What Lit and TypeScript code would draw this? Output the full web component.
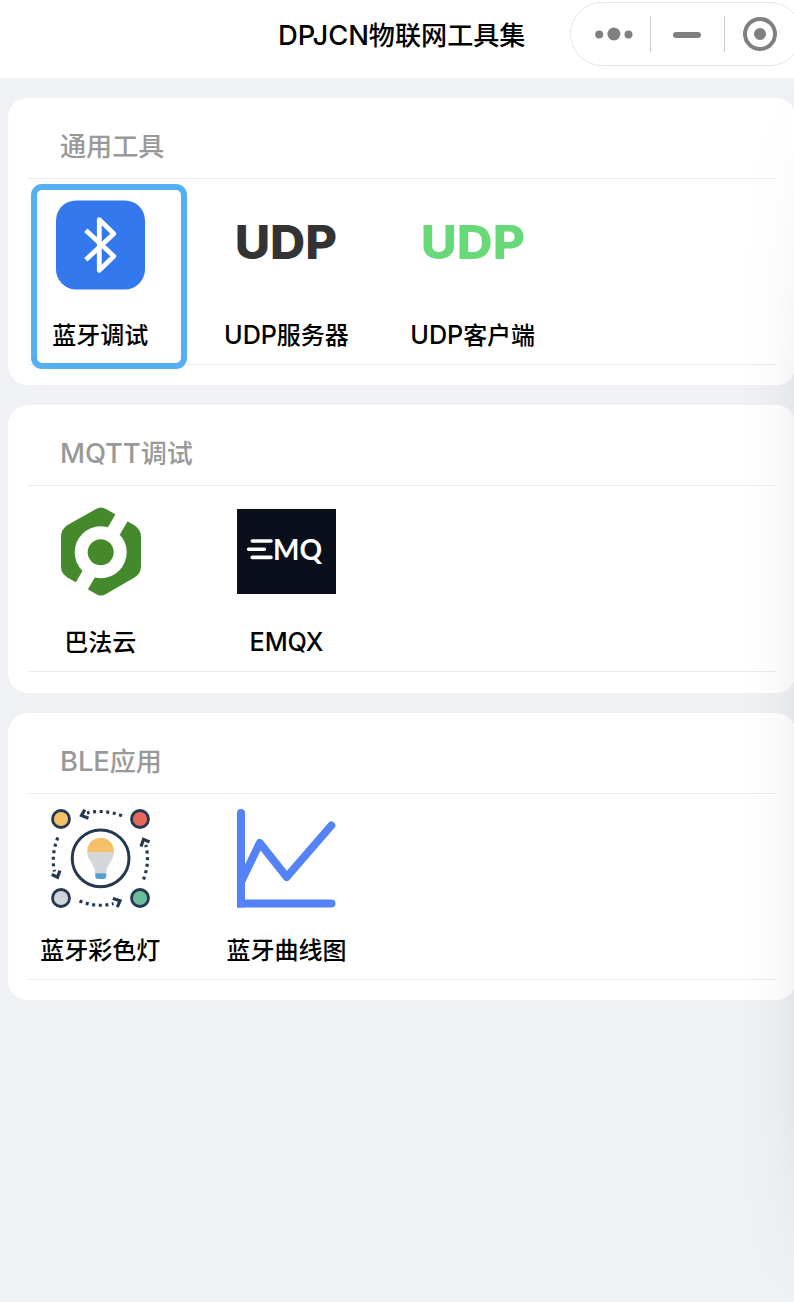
import { LitElement, html, css, svg, TemplateResult } from "lit";
import { customElement, property } from "lit/decorators.js";

interface Tool { label: string; icon: TemplateResult; active?: boolean }
interface Group { title: string; tools: Tool[] }

const bluetooth = html`<svg viewBox="0 0 100 100" width="100" height="100">
  <rect x="5" y="5.4" width="89" height="89" rx="20" fill="#3478ed"/>
  <path d="M34.8 35.2 L62.8 61.2 L48.3 75.4 V24.6 L62.8 38.8 L34.8 64.8" fill="none" stroke="#fff" stroke-width="4.8" stroke-linejoin="round"/>
</svg>`;

const udp = (color: string, width: number) => html`<svg viewBox="0 0 100 100" width="100" height="100" overflow="visible">
  <text class="udp" x="48.9" y="64.3" text-anchor="middle" fill=${color} textLength=${width} lengthAdjust="spacingAndGlyphs">UDP</text>
</svg>`;

const bafa = html`<svg viewBox="0 0 100 100" width="100" height="100">
  <path d="M45 7 Q50 3.8 55 7 L83 23.1 Q90 27.5 90 34.5 V64.5 Q90 71.5 83.5 75.5 L55 92 Q50 95 45 92 L16.5 75.5 Q10 71.5 10 64.5 V34.5 Q10 27.5 16.5 23.1 Z" fill="#448a2c"/>
  <path d="M74.5 9 L25.5 93" stroke="#fff" stroke-width="14"/>
  <circle cx="49.7" cy="50.3" r="26" fill="#fff"/>
  <circle cx="49.7" cy="50.3" r="13" fill="#448a2c"/>
</svg>`;

const emq = html`<svg viewBox="0 0 100 100" width="100" height="100">
  <rect x="0" y="7" width="99" height="85" fill="#0b0e1b"/>
  <path d="M15.3 39 H34 M11.6 47.3 H27.4 M15.3 55.4 H34" stroke="#fff" stroke-width="3.6" stroke-linecap="round"/>
  <text class="emq" x="36" y="57.7" fill="#fff" textLength="49" lengthAdjust="spacingAndGlyphs">MQ</text>
</svg>`;

const dots: [number, number, string][] = [
  [10, 10, "#f5c06a"], [89, 10, "#e5685a"], [10, 89, "#d1d5da"], [89, 89, "#6bbd9d"],
];

const lamp = html`<svg viewBox="0 0 100 100" width="100" height="100">
  ${dots.map(([x, y, c]) => svg`<circle cx=${x} cy=${y} r="8.5" fill=${c} stroke="#243850" stroke-width="2.8"/>`)}
  <circle cx="49.6" cy="49.3" r="28.4" fill="none" stroke="#243850" stroke-width="3"/>
  <path d="M36.2 43.4 C36.2 34 42 28.8 49.6 28.8 C57 28.8 63 34 63 43.4 Z" fill="#f5c06a"/>
  <path d="M36.2 43.2 H63 C63 51 55.5 55 55.3 64.3 H44.2 C44 55 36.2 51 36.2 43.2 Z" fill="#d4d7da"/>
  <path d="M44.2 64.2 H55.3 V66.8 Q55.3 70 52 70 H47.5 Q44.2 70 44.2 66.8 Z" fill="#579fd3"/>
  <g fill="none" stroke="#243850" stroke-width="3.2">
    <path d="M71 6.7 Q52 0 36 4" stroke-dasharray="3 3.6"/>
    <path d="M33.8 0.6 L30.5 6.5 L37.5 9.3"/>
    <path d="M6.8 28.5 Q0 46 3.4 62.5" stroke-dasharray="3 3.6"/>
    <path d="M0.8 65.5 L6.5 68.3 L9 61.6"/>
    <path d="M28.5 92 Q46 99 62.5 94.5" stroke-dasharray="3 3.6"/>
    <path d="M66.3 98.2 L69 91.8 L61.8 89.5"/>
    <path d="M92.5 70.5 Q99 53 94.8 36" stroke-dasharray="3 3.6"/>
    <path d="M98.6 33 L92.5 30.4 L90 37.6"/>
  </g>
</svg>`;

const chart = html`<svg viewBox="0 0 100 100" width="100" height="100">
  <g fill="none" stroke="#5583f6" stroke-width="8">
    <path d="M4 4 V94.5 H94.5" stroke-linecap="round"/>
    <path d="M4.5 72 L22.8 34 L49.7 68 L94.3 16.5" stroke-linecap="round" stroke-linejoin="round"/>
  </g>
  <path d="M0 90 H8 V98.5 H0 Z" fill="#5583f6"/>
</svg>`;

const groups: Group[] = [
  { title: "通用工具", tools: [
    { label: "蓝牙调试", icon: bluetooth, active: true },
    { label: "UDP服务器", icon: udp("#333", 102.5) },
    { label: "UDP客户端", icon: udp("#67d978", 104.5) },
  ] },
  { title: "MQTT调试", tools: [{ label: "巴法云", icon: bafa }, { label: "EMQX", icon: emq }] },
  { title: "BLE应用", tools: [{ label: "蓝牙彩色灯", icon: lamp }, { label: "蓝牙曲线图", icon: chart }] },
];

/** Latin runs are set slightly larger than the Chinese characters beside them. */
const mixed = (text: string) => {
  const latin = /^[A-Z]*/.exec(text)![0];
  return html`${latin ? html`<span class="latin">${latin}</span>` : ""}${text.slice(latin.length)}`;
};

const shared = css`
  *, *::after { box-sizing: border-box; }
  .latin { font-family: Inter, "Liberation Sans", sans-serif; font-size: 1.05em; font-weight: 450; letter-spacing: -0.003em; }
`;

@customElement("tool-group")
class ToolGroup extends LitElement {
  @property({ attribute: false }) group!: Group;

  static styles = [shared, css`
    :host { display: block; width: 788px; height: 287.4px; background: #fff; border-radius: 20px; }
    .title { height: 81px; margin: 0 20px; padding: 16px 32px 0; line-height: 62px; border-bottom: 1px solid #ebebec; font-size: 26.1px; font-weight: 500; color: #999; }
    .grid { display: grid; grid-template-columns: repeat(4, 186.3px); margin-left: -1px; height: 185px; }
    .tool { position: relative; display: flex; flex-direction: column; align-items: center; padding-top: 15.6px; }
    .tool svg { display: block; flex: none; margin-left: 1.7px; }
    .label { margin-top: 21.2px; line-height: 36px; font-size: 24px; font-weight: 500; color: #000; white-space: nowrap; }
    .active::after { content: ""; position: absolute; left: 24px; top: 5px; width: 156px; height: 185px; border: 6px solid #54aff3; border-radius: 11px; }
    .rule { margin: 0 20px; height: 1px; background: #ebebec; }
    .udp { font: 800 47px Inter, "Open Sans", sans-serif; }
    .emq { font: 700 28.5px Lato, sans-serif; }
  `];

  render() {
    return html`
      <div class="title">${mixed(this.group.title)}</div>
      <div class="grid">
        ${this.group.tools.map((t) => html`
          <div class="tool ${t.active ? "active" : ""}">${t.icon}<div class="label">${mixed(t.label)}</div></div>`)}
      </div>
      <div class="rule"></div>`;
  }
}

@customElement("app-root")
class AppRoot extends LitElement {
  static styles = [shared, css`
    :host { display: block; position: relative; width: 100%; height: 1302px; overflow: hidden; background: #f0f1f5; font-family: "Noto Sans CJK SC", sans-serif; }
    header { display: flex; height: 78px; background: #fff; padding: 2px 0 0 278px; }
    h1 { flex: none; width: 292px; margin: 0; font-size: 26.1px; font-weight: 500; line-height: 64px; color: #000; white-space: nowrap; }
    .capsule { flex: none; width: 232px; height: 64px; border: 1px solid #e6e6e6; border-radius: 32px; }
    .capsule svg { display: block; }
    main { display: flex; flex-direction: column; gap: 20px; padding: 20px 0 0 8px; }
    .shade { position: absolute; right: 0; top: 78px; width: 50px; bottom: 0; pointer-events: none;
      background: linear-gradient(to left, rgba(0,0,0,.045), rgba(0,0,0,.015) 40%, transparent);
      mask-image: linear-gradient(to bottom, transparent 0, #000 340px, #000 1020px, transparent 1224px); }
  `];

  render() {
    return html`
      <header>
        <h1>${mixed("DPJCN物联网工具集")}</h1>
        <div class="capsule">
          <svg width="230" height="62" viewBox="571 3 230 62" fill="#808080">
            <circle cx="599.2" cy="34.5" r="4"/><circle cx="613.9" cy="34" r="6.5"/><circle cx="628.5" cy="34.5" r="4"/>
            <path d="M650.5 16 h1 v36 h-1 Z M724.5 16 h1 v36 h-1 Z" transform="translate(-.5 0)" fill="#cfcfcf"/>
            <rect x="673" y="32" width="28" height="6" rx="3"/>
            <circle cx="760" cy="34" r="15" fill="none" stroke="#808080" stroke-width="4"/>
            <circle cx="760" cy="34" r="6"/>
          </svg>
        </div>
      </header>
      <main>${groups.map((g) => html`<tool-group .group=${g}></tool-group>`)}</main>
      <div class="shade"></div>`;
  }
}
